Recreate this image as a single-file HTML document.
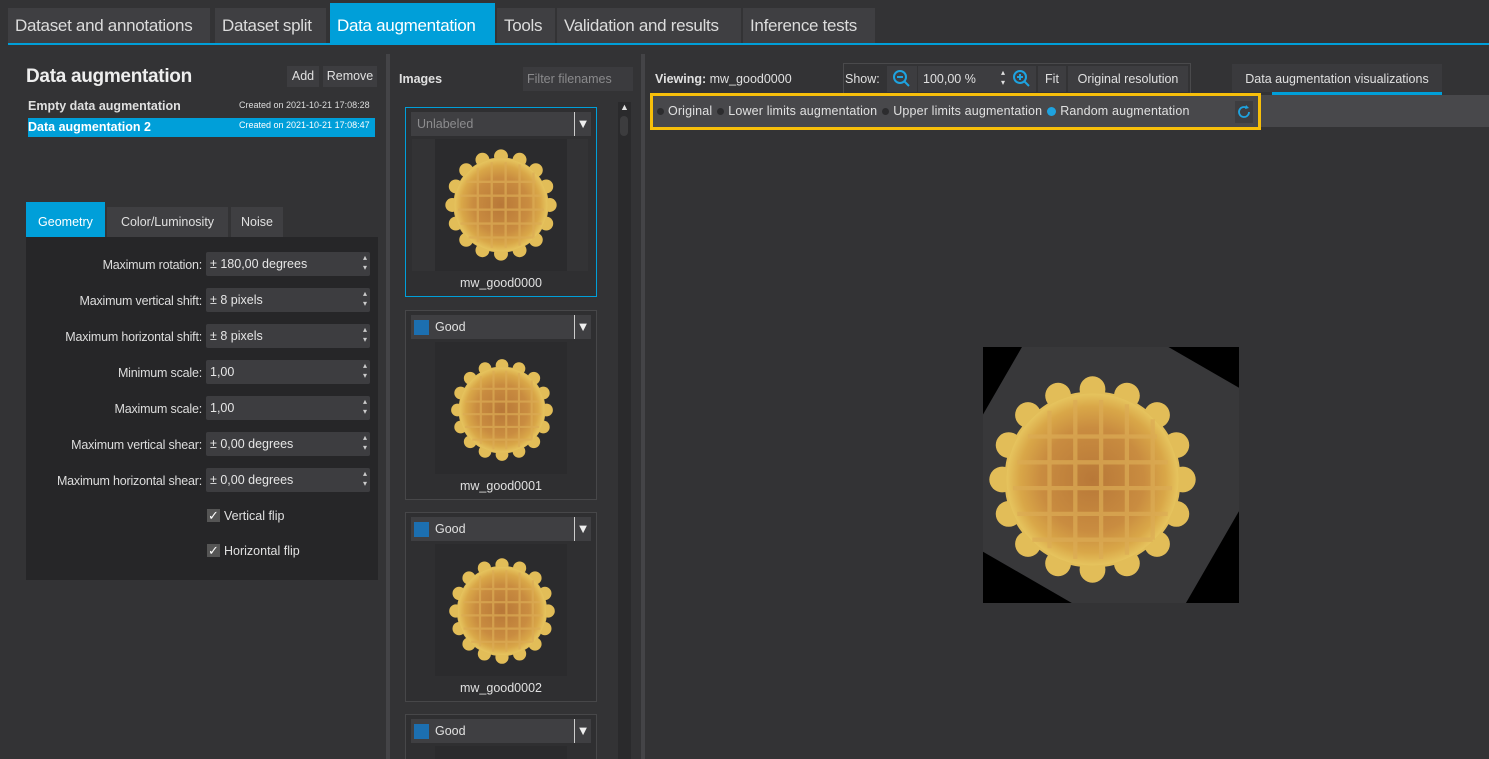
<!DOCTYPE html>
<html><head><meta charset="utf-8"><style>
*{box-sizing:border-box;margin:0;padding:0}
html,body{width:1489px;height:759px;overflow:hidden}
body{background:#333335;font-family:"Liberation Sans",sans-serif;color:#e0e0e0;font-size:12.5px;position:relative}
.a{position:absolute}
.tab{position:absolute;top:8px;height:35px;background:#3f3f42;font-size:17px;line-height:35px;padding-left:7px;color:#dcdcdc;letter-spacing:-0.3px}
.fl{position:absolute;left:0;width:176px;text-align:right;font-size:12.5px;color:#ddd;letter-spacing:-0.2px}
.fi{position:absolute;left:180px;width:164px;height:24px;background:#3d3d40;border-radius:2px;font-size:12.5px;line-height:24px;padding-left:4px;color:#e6e6e6}
.fi:after{content:"▴\A▾";white-space:pre;position:absolute;right:3px;top:1px;font-size:8px;line-height:10px;color:#ccc}
.card{position:absolute;left:405px;width:192px;height:190px;border:1px solid #474749;background:#2f2f31;overflow:hidden}
.card .hd{position:absolute;left:5px;top:4px;width:180px;height:24px;background:#3f3f42;font-size:12.5px;line-height:24px;padding-left:24px}
.card .hd:before{content:"";position:absolute;left:3px;top:5px;width:15px;height:15px;background:#1c6fb0}
.card .hd.u:before{display:none}
.card .hd:after{content:"▼";position:absolute;right:0;top:0;width:16px;border-left:1px solid #ccc;text-align:center;font-size:13px;color:#eee}
.card .im{position:absolute;left:29px;top:31px;width:132px;height:132px;background:#2b2b2d}
.card .nm{position:absolute;left:0;width:100%;top:168px;text-align:center;font-size:12.5px}
.rb{display:inline-block;width:7px;height:7px;border-radius:50%;background:#2c2c2e;margin:0 4px 0 5px;vertical-align:middle}
</style></head><body>
<svg width="0" height="0" style="position:absolute"><defs>
<radialGradient id="g" cx="50%" cy="50%" r="50%"><stop offset="0" stop-color="#b87838"/><stop offset=".6" stop-color="#c98c40"/><stop offset=".85" stop-color="#d9a748"/><stop offset="1" stop-color="#e6c45e"/></radialGradient>
<symbol id="w" viewBox="0 0 100 100">
<g fill="#e2bd58">
<circle cx="50" cy="50" r="41"/>
<circle cx="50" cy="8" r="6"/><circle cx="66" cy="11" r="6"/><circle cx="80" cy="20" r="6"/><circle cx="89" cy="34" r="6"/><circle cx="92" cy="50" r="6"/><circle cx="89" cy="66" r="6"/><circle cx="80" cy="80" r="6"/><circle cx="66" cy="89" r="6"/><circle cx="50" cy="92" r="6"/><circle cx="34" cy="89" r="6"/><circle cx="20" cy="80" r="6"/><circle cx="11" cy="66" r="6"/><circle cx="8" cy="50" r="6"/><circle cx="11" cy="34" r="6"/><circle cx="20" cy="20" r="6"/><circle cx="34" cy="11" r="6"/>
</g>
<circle cx="50" cy="50" r="40" fill="url(#g)"/>
<g stroke="#dcac55" stroke-width="2" opacity=".7">
<path d="M20 30L80 30M15 42L85 42M13 54L87 54M15 66L85 66M22 78L78 78M30 18L30 82M42 13L42 87M54 13L54 87M66 15L66 85M78 22L78 78"/>
</g>
</symbol>
</defs></svg>

<div class="tab" style="left:8px;width:202px">Dataset and annotations</div>
<div class="tab" style="left:215px;width:111px">Dataset split</div>
<div class="tab" style="left:330px;width:165px;top:3px;height:40px;line-height:45px;background:#009fd9;color:#fff">Data augmentation</div>
<div class="tab" style="left:497px;width:58px">Tools</div>
<div class="tab" style="left:557px;width:184px">Validation and results</div>
<div class="tab" style="left:743px;width:132px">Inference tests</div>
<div class="a" style="left:8px;top:43px;width:1481px;height:2px;background:#009fd9"></div>

<div class="a" style="left:26px;top:66px;font-size:19px;font-weight:bold;color:#eee;letter-spacing:-0.3px">Data augmentation</div>
<div class="a" style="left:287px;top:66px;width:32px;height:21px;background:#3d3d40;text-align:center;line-height:21px">Add</div>
<div class="a" style="left:323px;top:66px;width:54px;height:21px;background:#3d3d40;text-align:center;line-height:21px">Remove</div>
<div class="a" style="left:28px;top:99px;font-weight:bold;font-size:12.5px">Empty data augmentation</div>
<div class="a" style="left:239px;top:100px;font-size:9px;color:#ddd">Created on 2021-10-21 17:08:28</div>
<div class="a" style="left:28px;top:118px;width:347px;height:19px;background:#009fd9"></div>
<div class="a" style="left:28px;top:120px;font-weight:bold;font-size:12.5px;color:#fff">Data augmentation 2</div>
<div class="a" style="left:239px;top:120px;font-size:9px;color:#fff">Created on 2021-10-21 17:08:47</div>

<div class="a" style="left:26px;top:202px;width:79px;height:35px;background:#009fd9;color:#fff;line-height:40px;text-align:center">Geometry</div>
<div class="a" style="left:107px;top:207px;width:121px;height:30px;background:#3f3f42;line-height:30px;text-align:center">Color/Luminosity</div>
<div class="a" style="left:231px;top:207px;width:52px;height:30px;background:#3f3f42;line-height:30px;text-align:center">Noise</div>
<div class="a" style="left:26px;top:237px;width:352px;height:343px;background:#262628">
<div class="fl" style="top:21px">Maximum rotation:</div><div class="fi" style="top:15px">± 180,00 degrees</div>
<div class="fl" style="top:57px">Maximum vertical shift:</div><div class="fi" style="top:51px">± 8 pixels</div>
<div class="fl" style="top:93px">Maximum horizontal shift:</div><div class="fi" style="top:87px">± 8 pixels</div>
<div class="fl" style="top:129px">Minimum scale:</div><div class="fi" style="top:123px">1,00</div>
<div class="fl" style="top:165px">Maximum scale:</div><div class="fi" style="top:159px">1,00</div>
<div class="fl" style="top:201px">Maximum vertical shear:</div><div class="fi" style="top:195px">± 0,00 degrees</div>
<div class="fl" style="top:237px">Maximum horizontal shear:</div><div class="fi" style="top:231px">± 0,00 degrees</div>
<div class="a" style="left:181px;top:272px;width:13px;height:13px;background:#555;color:#fff;font-size:13px;line-height:13px;text-align:center">✓</div>
<div class="a" style="left:198px;top:272px">Vertical flip</div>
<div class="a" style="left:181px;top:307px;width:13px;height:13px;background:#555;color:#fff;font-size:13px;line-height:13px;text-align:center">✓</div>
<div class="a" style="left:198px;top:307px">Horizontal flip</div>
</div>

<div class="a" style="left:386px;top:54px;width:4px;height:705px;background:#444447"></div>

<div class="a" style="left:399px;top:72px;font-weight:bold">Images</div>
<div class="a" style="left:523px;top:67px;width:110px;height:24px;background:#3b3b3e;color:#8a8a8c;line-height:24px;padding-left:4px">Filter filenames</div>
<div class="a" style="left:618px;top:102px;width:13px;height:657px;background:#2a2a2c"><div style="margin:14px 0 0 2px;width:8px;height:20px;border-radius:4px;background:#3c3c3e"></div></div>
<div class="a" style="left:620px;top:102px;font-size:9px">▲</div>

<div class="card" style="top:107px;border-color:#009fd9">
<div class="hd u" style="padding-left:6px;color:#8c8c8e">Unlabeled</div>
<div class="im" style="left:6px;width:176px;background:#333335"></div>
<div class="im"><svg width="132" height="132"><use href="#w" x="8" y="4" width="116" height="124"/></svg></div>
<div class="nm">mw_good0000</div></div>
<div class="card" style="top:310px"><div class="hd">Good</div><div class="im"><svg width="132" height="132"><use href="#w" x="14" y="12" width="106" height="112"/></svg></div><div class="nm">mw_good0001</div></div>
<div class="card" style="top:512px"><div class="hd">Good</div><div class="im"><svg width="132" height="132"><use href="#w" x="12" y="10" width="110" height="114"/></svg></div><div class="nm">mw_good0002</div></div>
<div class="card" style="top:714px;height:45px;border-bottom:none"><div class="hd">Good</div><div class="im" style="height:14px"></div></div>

<div class="a" style="left:641px;top:54px;width:4px;height:705px;background:#444447"></div>

<div class="a" style="left:655px;top:72px"><b>Viewing:</b> mw_good0000</div>
<div class="a" style="left:843px;top:63px;width:348px;height:30px;border:1px solid #4a4a4c;border-bottom:none"></div>
<div class="a" style="left:845px;top:72px">Show:</div>
<div class="a" style="left:887px;top:66px;width:30px;height:26px;background:#3d3d40"><svg width="30" height="26"><circle cx="13" cy="11" r="6" fill="none" stroke="#1ea3e0" stroke-width="2"/><path d="M10 11h6M17 15l5 5" stroke="#1ea3e0" stroke-width="2"/></svg></div>
<div class="a" style="left:918px;top:66px;width:90px;height:26px;background:#3d3d40;line-height:26px;padding-left:5px">100,00 %<span style="position:absolute;right:3px;top:2px;font-size:8px;line-height:10px">▴<br>▾</span></div>
<div class="a" style="left:1008px;top:66px;width:28px;height:26px;background:#3d3d40"><svg width="28" height="26"><circle cx="12" cy="11" r="6" fill="none" stroke="#1ea3e0" stroke-width="2"/><path d="M9 11h6M12 8v6M16 15l5 5" stroke="#1ea3e0" stroke-width="2"/></svg></div>
<div class="a" style="left:1038px;top:66px;width:28px;height:26px;background:#3d3d40;line-height:26px;text-align:center">Fit</div>
<div class="a" style="left:1068px;top:66px;width:120px;height:26px;background:#3d3d40;line-height:26px;text-align:center">Original resolution</div>
<div class="a" style="left:1232px;top:64px;width:210px;height:28px;background:#3a3a3d;line-height:30px;text-align:center">Data augmentation visualizations</div>
<div class="a" style="left:1272px;top:92px;width:170px;height:3px;background:#009fd9"></div>
<div class="a" style="left:652px;top:95px;width:837px;height:32px;background:#48484b"></div>
<div class="a" style="left:650px;top:93px;width:611px;height:37px;border:3px solid #f7bf0a"></div>
<div class="a" style="left:652px;top:104px;font-size:12.5px;white-space:nowrap;letter-spacing:0.15px"><span class="rb"></span>Original<span class="rb"></span>Lower limits augmentation<span class="rb"></span>Upper limits augmentation<span class="rb" style="background:#1ea3e0;width:9px;height:9px"></span>Random augmentation</div>
<div class="a" style="left:1235px;top:101px;width:18px;height:22px;background:#3d3d40"><svg width="18" height="22"><path d="M14 11a5 5 0 1 1-2-4" fill="none" stroke="#1ea3e0" stroke-width="1.8"/><path d="M11 4l3 3-4 1z" fill="#1ea3e0"/></svg></div>

<div class="a" style="left:983px;top:347px;width:256px;height:256px;background:#000;overflow:hidden">
<div class="a" style="left:-10px;top:-14px;width:270px;height:270px;background:#38383a;transform:rotate(30deg)"></div>
<svg class="a" style="left:0;top:0" width="256" height="256"><use href="#w" x="2" y="20" width="215" height="225"/></svg>
</div>
</body></html>
